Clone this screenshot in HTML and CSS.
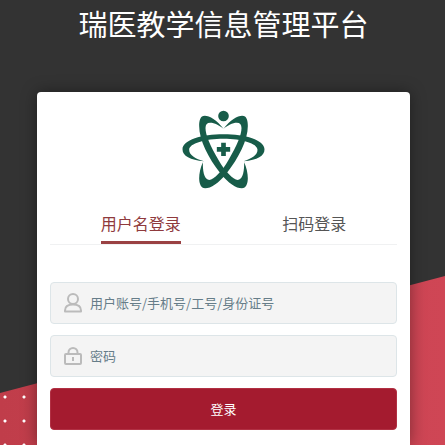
FILE: index.html
```html
<!DOCTYPE html>
<html lang="zh-CN">

<head>
    <meta charset="UTF-8">
    <meta name="viewport" content="width=device-width, initial-scale=1.0">
    <title>瑞医教学信息管理平台</title>
    <link rel="stylesheet" href="styles.css">
</head>

<body>
    <div class="backdrop"></div>
    <div class="page">
        <h1>瑞医教学信息管理平台</h1>
        <div class="card">
            <svg class="logo" viewBox="0 0 320 300" aria-hidden="true">
                <circle cx="160" cy="48" r="16"/>
                <path d="M102 184C60 180 37 168 37 148C37 120 95 103 160 103C225 103 283 120 283 148C283 168 262 180 220 184C245 175 262 165 262 149C262 130 215 116 160 116C105 116 57 130 57 149C57 165 75 176 102 184Z"/>
                <path id="orbit" d="M160 86C140 60 118 47 104 47C90 47 87 62 87 78C87 120 115 175 150 219C175 250 198 265 215 265C228 265 233 250 233 235C233 220 229 203 222 187C222 210 220 238 203 240C188 238 165 215 145 180C120 137 106 105 106 84C106 73 111 68 120 68C133 68 148 76 160 86Z"/>
                <use href="#orbit" transform="translate(320 0) scale(-1 1)"/>
                <path d="M153 128h14v13h13v14h-13v13h-14v-13h-13v-14h13z"/>
            </svg>
            <div class="tabs">
                <button type="button" class="tab active">用户名登录</button>
                <button type="button" class="tab">扫码登录</button>
            </div>
            <form>
                <label class="field">
                    <svg class="icon" viewBox="0 0 18 20" aria-hidden="true">
                        <circle cx="9" cy="6" r="5"/>
                        <path d="M1 18.5v-1c0-4 3-6 8-6s8 2 8 6v1z"/>
                    </svg>
                    <input type="text" placeholder="用户账号/手机号/工号/身份证号" aria-label="用户账号">
                </label>
                <label class="field">
                    <svg class="icon" viewBox="0 0 18 20" aria-hidden="true">
                        <rect x="1" y="8" width="16" height="10" rx="1"/>
                        <path d="M4.500 8v-1.500a4.500 4.500 0 0 1 9 0v1.500M9 11v4"/>
                    </svg>
                    <input type="password" placeholder="密码" aria-label="密码">
                </label>
                <button type="submit" class="submit">登录</button>
            </form>
        </div>
    </div>
</body>

</html>
```

FILE: styles.css
```css
* {
    box-sizing: border-box;
}

body {
    margin: 0;
    background-color: #333;
    font-family: "Noto Sans CJK SC", sans-serif;
}

/* slanted red area with a strip of dots on the left */
.backdrop {
    position: absolute;
    inset: 0;
    background:
        radial-gradient(circle at 5px 13px, #fff 1px, transparent 2px) 0 0 / 19px 24px repeat-y,
        radial-gradient(circle at 5px 13px, #fff 1px, transparent 2px) 19px 0 / 19px 24px repeat-y,
        linear-gradient(90deg, #c03d4a, #cf4655);
    clip-path: polygon(0 88.3%, 100% 62%, 100% 100%, 0 100%);
}

.page {
    position: relative;
    display: flex;
    flex-direction: column;
    min-height: 100vh;
    padding: 2px 35px 0 37px;
}

h1 {
    margin: 0 0 48px;
    color: #fff;
    font-size: 29px;
    font-weight: 400;
    line-height: 42px;
    text-align: center;
}

.card {
    flex: 1;
    padding: 8px 13px 14px;
    background: #fff;
    border-radius: 4px 4px 0 0;
    box-shadow: 0 0 16px rgba(0, 0, 0, 0.4);
}

.logo {
    display: block;
    width: 107px;
    height: 100px;
    margin: 0 auto;
    fill: #175c49;
}

.tabs {
    display: flex;
    justify-content: space-around;
    margin-bottom: 37px;
    border-bottom: 1px solid #f0f1f2;
}

.tab {
    height: 44px;
    padding: 4px 0 0;
    border: none;
    border-bottom: 3px solid transparent;
    background: none;
    color: #555;
    font-family: inherit;
    font-size: 16px;
    cursor: pointer;
}

.tab.active {
    color: #8f3a3d;
    border-bottom-color: #9a4143;
}

form {
    display: flex;
    flex-direction: column;
    gap: 11px;
}

.field {
    display: flex;
    align-items: center;
    gap: 8px;
    height: 42px;
    padding: 0 13px;
    border: 1px solid #dde5e8;
    border-radius: 4px;
    background: #f4f4f4;
}

.icon {
    width: 18px;
    height: 20px;
    fill: none;
    stroke: #bbb;
    stroke-width: 2;
    stroke-linejoin: round;
}

.field input {
    flex: 1;
    min-width: 0;
    padding: 0 0 2px;
    border: none;
    outline: none;
    background: none;
    color: #667d89;
    font-family: inherit;
    font-size: 13px;
}

.field input::placeholder {
    color: #667d89;
}

.submit {
    height: 42px;
    padding: 0 0 2px;
    border: 1px solid #b13043;
    border-radius: 4px;
    background: #a41b2f;
    color: #fff;
    font-family: inherit;
    font-size: 13px;
    cursor: pointer;
}
```
